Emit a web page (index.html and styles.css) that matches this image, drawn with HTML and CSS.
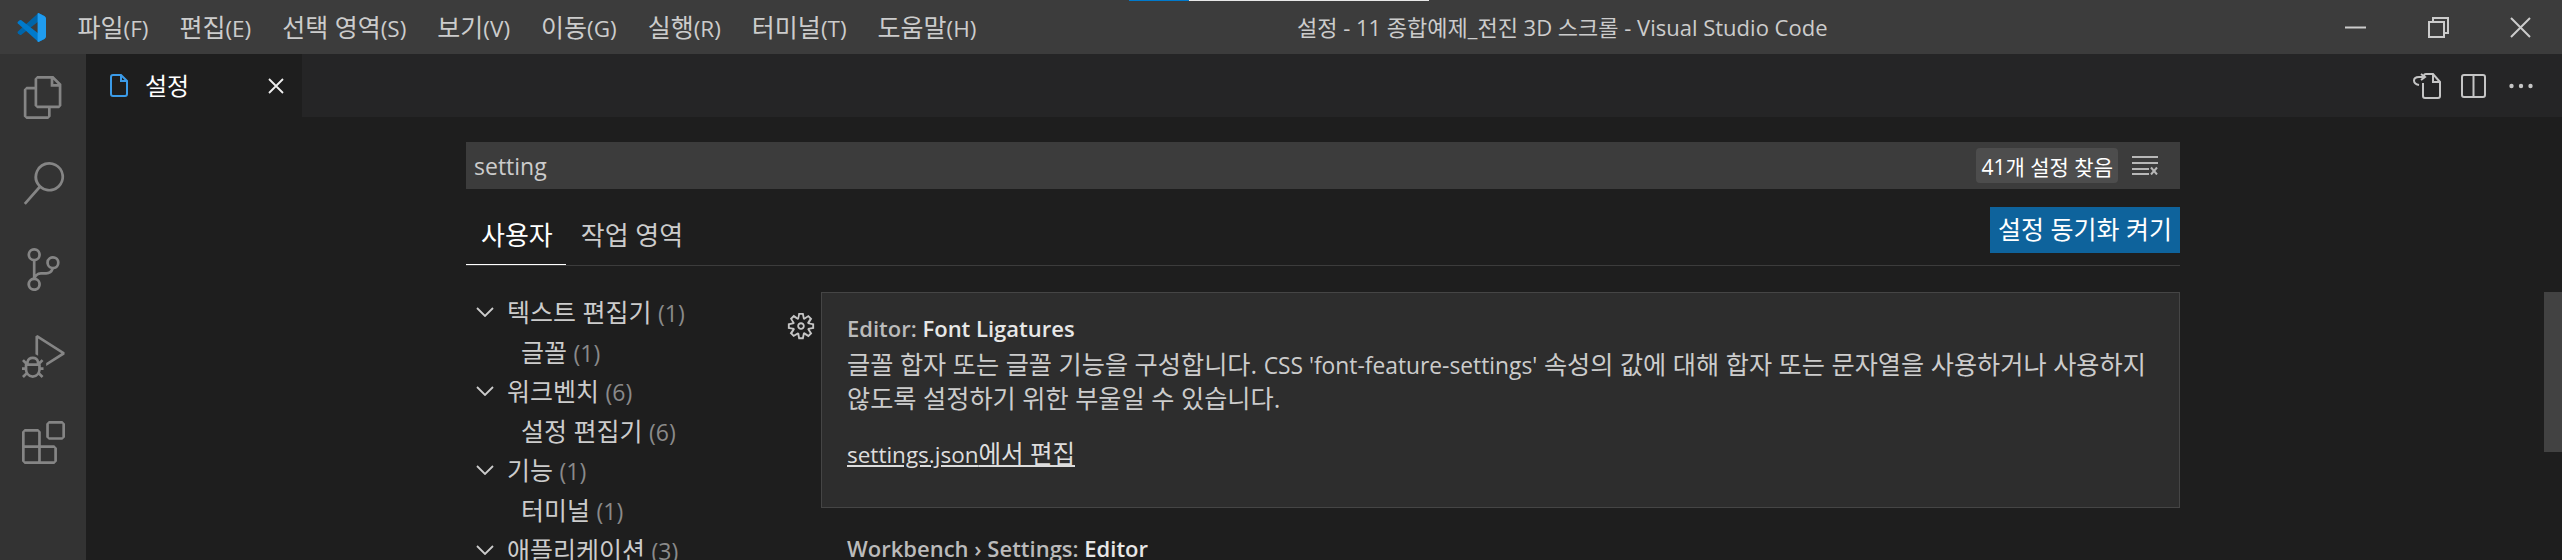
FILE: index.html
```html
<!DOCTYPE html>
<html lang="ko">
<head>
    <meta charset="UTF-8">
    <title>설정 - 11 종합예제_전진 3D 스크롤 - Visual Studio Code</title>
    <link rel="stylesheet" href="styles.css">
</head>
<body>

<svg class="defs" width="0" height="0">
    <symbol id="chevron" viewBox="0 0 18 10"><polyline points="1,1 9,9 17,1" fill="none" stroke="currentColor" stroke-width="1.8"/></symbol>
</svg>

<div class="titlebar">
    <svg class="logo" viewBox="0 0 100 100">
        <path fill="#0065a9" d="M97 11 74 0 3 64q-3 3 0 6l6 5q3 2 6 0z"/>
        <path fill="#007acc" d="M97 89 74 100 3 36q-3-3 0-6l6-5q3-2 6 0z"/>
        <path fill="#1f9cf0" d="M74 100q-2 0-3-2V2q1-2 3-2l20 10q6 3 6 8v64q0 5-6 8z"/>
    </svg>
    <div class="menu">
        <span class="menu-item">파일<span class="latin">(F)</span></span>
        <span class="menu-item">편집<span class="latin">(E)</span></span>
        <span class="menu-item">선택 영역<span class="latin">(S)</span></span>
        <span class="menu-item">보기<span class="latin">(V)</span></span>
        <span class="menu-item">이동<span class="latin">(G)</span></span>
        <span class="menu-item">실행<span class="latin">(R)</span></span>
        <span class="menu-item">터미널<span class="latin">(T)</span></span>
        <span class="menu-item">도움말<span class="latin">(H)</span></span>
    </div>
    <div class="window-title">설정 - 11 종합예제_전진 3D 스크롤 - Visual Studio Code</div>
    <div class="window-controls">
        <div class="window-btn">
            <svg width="21" height="3" viewBox="0 0 21 3"><path d="M0 1.5h21" stroke="#ccc" stroke-width="2"/></svg>
        </div>
        <div class="window-btn">
            <svg width="21" height="21" viewBox="0 0 21 21" fill="none" stroke="#ccc" stroke-width="2"><rect x="1" y="5" width="15" height="15"/><path d="M5 5V1h15v15h-4"/></svg>
        </div>
        <div class="window-btn">
            <svg width="21" height="21" viewBox="0 0 21 21"><path d="M1 1l19 19M20 1 1 20" stroke="#ccc" stroke-width="2"/></svg>
        </div>
    </div>
    <div class="progress-tick"><span></span></div>
</div>

<div class="workbench">
    <div class="activitybar">
        <div class="activity-icon">
            <svg viewBox="0 0 24 24"><path d="M17.5 0h-9L7 1.5V6H2.5L1 7.5v15.07L2.5 24h12.07L16 22.57V18h4.7l1.3-1.43V4.5L17.5 0zm0 2.12l2.38 2.38H17.5V2.12zm-3 20.38h-12v-15H7v9.07L8.5 18h6v4.5zm6-6h-12v-15H16V6h4.5v10.5z"/></svg>
        </div>
        <div class="activity-icon">
            <svg viewBox="0 0 24 24"><path d="M15.25 0a8.25 8.25 0 0 0-6.18 13.72L1 22.88l1.12 1 8.05-9.12A8.251 8.251 0 1 0 15.25.01V0zm0 15a6.75 6.75 0 1 1 0-13.5 6.75 6.75 0 0 1 0 13.5z"/></svg>
        </div>
        <div class="activity-icon">
            <svg viewBox="0 0 24 24"><path d="M21.007 8.222A3.738 3.738 0 0 0 15.045 5.2a3.737 3.737 0 0 0 1.156 6.583 2.988 2.988 0 0 1-2.668 1.67h-2.99a4.456 4.456 0 0 0-2.989 1.165V7.4a3.737 3.737 0 1 0-1.494 0v9.117a3.776 3.776 0 1 0 1.816.099 2.99 2.99 0 0 1 2.668-1.667h2.99a4.484 4.484 0 0 0 4.223-3.039 3.736 3.736 0 0 0 3.25-3.687zM4.565 3.738a2.242 2.242 0 1 1 4.484 0 2.242 2.242 0 0 1-4.484 0zm4.484 16.441a2.242 2.242 0 1 1-4.484 0 2.242 2.242 0 0 1 4.484 0zm8.221-9.715a2.242 2.242 0 1 1 0-4.485 2.242 2.242 0 0 1 0 4.485z"/></svg>
        </div>
        <div class="activity-icon">
            <svg viewBox="0 0 24 24"><path d="M10.94 13.5l-1.32 1.32a3.73 3.73 0 0 0-7.24 0L1.06 13.5 0 14.56l1.72 1.72-.22.22V18H0v1.5h1.5v.08c.077.489.214.966.41 1.42L0 22.94 1.06 24l1.65-1.65A4.308 4.308 0 0 0 6 24a4.31 4.31 0 0 0 3.29-1.65L10.94 24 12 22.94 10.09 21c.198-.464.336-.951.41-1.45v-.05H12V18h-1.5v-1.5l-.22-.22L12 14.56l-1.06-1.06zM6 13.5a2.25 2.25 0 0 1 2.25 2.25h-4.5A2.25 2.25 0 0 1 6 13.5zm3 6a3.33 3.33 0 0 1-3 3 3.33 3.33 0 0 1-3-3v-2.25h6v2.25zm14.76-9.9v1.26L13.5 17.37v-1.77l8.45-5.37L9 2v9.6a5.28 5.28 0 0 0-1.5-.9V.63L8.64 0l15.12 9.6z"/></svg>
        </div>
        <div class="activity-icon">
            <svg viewBox="0 0 24 24"><path d="M13.5 1.5L15 0h7.5L24 1.5V9l-1.5 1.5H15L13.5 9V1.5zm1.5 0V9h7.5V1.5H15zM0 15V6l1.5-1.5H9L10.5 6v7.5H18l1.5 1.5v7.5L18 24H1.5L0 22.5V15zm9-1.5V6H1.5v7.5H9zM9 15H1.5v7.5H9V15zm1.5 7.5H18V15h-7.5v7.5z"/></svg>
        </div>
    </div>

    <div class="editor">
        <div class="tabbar">
            <div class="tab">
                <svg class="tab-icon" viewBox="0 0 18 23" fill="none" stroke="#3b9be8" stroke-width="2"><path d="M1 3q0-2 2-2h8l6 6v13q0 2-2 2H3q-2 0-2-2z"/><path d="M11 1v6h6"/></svg>
                <span class="tab-label">설정</span>
                <svg class="tab-close" viewBox="0 0 16 16"><path d="M1 1l14 14M15 1 1 15" stroke="#eee" stroke-width="1.8"/></svg>
            </div>
            <div class="tab-actions">
                <div class="tab-action">
                    <svg width="28" height="26" viewBox="0 0 28 26" fill="none" stroke="#c5c5c5" stroke-width="2"><path d="M10 10v13q0 2 2 2h13q2 0 2-2V9l-7-8h-7q-2 0-2 2"/><path d="M20 1v8h7"/><path d="M6 12Q1 11 1 7.5T6 4h6"/><path d="M8 1l4 3-4 3"/></svg>
                </div>
                <div class="tab-action">
                    <svg width="25" height="24" viewBox="0 0 25 24" fill="none" stroke="#c5c5c5" stroke-width="2"><rect x="1" y="1" width="23" height="22" rx="2"/><path d="M12.5 1v22"/></svg>
                </div>
                <div class="tab-action">
                    <svg width="24" height="6" viewBox="0 0 24 6" fill="#c5c5c5"><circle cx="2.5" cy="3" r="2.2"/><circle cx="12" cy="3" r="2.2"/><circle cx="21.5" cy="3" r="2.2"/></svg>
                </div>
            </div>
        </div>

        <div class="settings">
            <div class="search">
                <span class="search-value">setting</span>
                <span class="search-count">41개 설정 찾음</span>
                <svg class="search-clear" viewBox="0 0 26 19" fill="none" stroke="#b8b8b8" stroke-width="2"><path d="M0 1h26M0 7h26M0 13h17M0 18h17"/><path d="M19 11.5l6 7M25 11.5l-6 7"/></svg>
            </div>

            <div class="settings-header">
                <div class="scope-tab active">사용자</div>
                <div class="scope-tab">작업 영역</div>
                <div class="sync-btn">설정 동기화 켜기</div>
            </div>

            <div class="settings-body">
                <div class="toc">
                    <div class="toc-row"><svg class="chevron"><use href="#chevron"/></svg>텍스트 편집기 <span class="count">(1)</span></div>
                    <div class="toc-row child">글꼴 <span class="count">(1)</span></div>
                    <div class="toc-row"><svg class="chevron"><use href="#chevron"/></svg>워크벤치 <span class="count">(6)</span></div>
                    <div class="toc-row child">설정 편집기 <span class="count">(6)</span></div>
                    <div class="toc-row"><svg class="chevron"><use href="#chevron"/></svg>기능 <span class="count">(1)</span></div>
                    <div class="toc-row child">터미널 <span class="count">(1)</span></div>
                    <div class="toc-row"><svg class="chevron"><use href="#chevron"/></svg>애플리케이션 <span class="count">(3)</span></div>
                </div>

                <div class="setting-list">
                    <div class="setting-row">
                        <svg class="gear" viewBox="0 0 16 16"><path fill="#c5c5c5" d="M9.1 4.4L8.6 2H7.4l-.5 2.4-.7.3-2-1.3-.9.8 1.3 2-.2.7-2.4.5v1.2l2.4.5.3.8-1.3 2 .8.8 2-1.3.8.3.4 2.3h1.2l.5-2.4.8-.3 2 1.3.8-.8-1.3-2 .3-.8 2.3-.4V7.4l-2.4-.5-.3-.8 1.3-2-.8-.8-2 1.3-.7-.2zM9.4 1l.5 2.4L12 2.1l2 2-1.4 2.1 2.4.4v2.8l-2.4.5L14 12l-2 2-2.1-1.4-.5 2.4H6.6l-.5-2.4L4 13.9l-2-2 1.4-2.1L1 9.4V6.6l2.4-.5L2.1 4l2-2 2.1 1.4.4-2.4h2.8zm.6 7c0 1.1-.9 2-2 2s-2-.9-2-2 .9-2 2-2 2 .9 2 2zM8 9c.6 0 1-.4 1-1s-.4-1-1-1-1 .4-1 1 .4 1 1 1z"/></svg>
                        <div class="setting-box">
                            <div class="setting-title">Editor: <b>Font Ligatures</b></div>
                            <div class="setting-desc">글꼴 합자 또는 글꼴 기능을 구성합니다. <span class="latin">CSS 'font-feature-settings'</span> 속성의 값에 대해 합자 또는 문자열을 사용하거나 사용하지<br>않도록 설정하기 위한 부울일 수 있습니다.</div>
                            <div class="setting-link"><span class="latin">settings.json</span>에서 편집</div>
                        </div>
                    </div>
                    <div class="setting-next">
                        <div class="setting-title">Workbench › Settings: <b>Editor</b></div>
                    </div>
                </div>
            </div>
        </div>
        <div class="scrollbar"></div>
    </div>
</div>

</body>
</html>
```

FILE: styles.css
```css
html, body {
    margin: 0;
    height: 560px;
    overflow: hidden;
    background: #1e1e1e;
}
body {
    font-family: "Open Sans", "Noto Sans CJK KR", sans-serif;
    font-size: 25px;
    color: #ccc;
}
.latin {
    font-size: 22.5px;
}
.defs {
    display: block;
    height: 0;
}
.titlebar {
    display: flex;
    align-items: center;
    height: 54px;
    background: #3c3c3c;
    position: relative;
}
.logo {
    width: 29px;
    height: 29px;
    margin-left: 17px;
}
.menu {
    display: flex;
    margin: 0 0 2px 16px;
}
.menu-item {
    padding: 0 15.5px;
    font-size: 25px;
    white-space: nowrap;
}
.window-title {
    margin: 0 0 2px 305px;
    flex: 1;
    font-size: 22px;
    white-space: nowrap;
}
.window-controls {
    display: flex;
}
.window-btn {
    width: 82.67px;
    height: 54px;
    display: flex;
    align-items: center;
    justify-content: center;
}
.progress-tick {
    position: absolute;
    left: 1129px;
    top: 0;
    width: 300px;
    height: 1px;
    background: #e8e8e8;
}
.progress-tick span {
    display: block;
    width: 60px;
    height: 1px;
    background: #007acc;
}
.workbench {
    display: flex;
    height: 506px;
}
.activitybar {
    width: 86px;
    flex-shrink: 0;
    background: #333;
}
.activity-icon {
    height: 86.4px;
    display: flex;
    align-items: center;
    justify-content: center;
}
.activity-icon svg {
    width: 43px;
    height: 43px;
    fill: #858585;
}
.editor {
    flex: 1;
    position: relative;
    overflow: hidden;
}
.tabbar {
    display: flex;
    justify-content: space-between;
    height: 63px;
    background: #252526;
}
.tab {
    width: 216px;
    box-sizing: border-box;
    display: flex;
    align-items: center;
    padding-left: 24px;
    background: #1e1e1e;
    color: #fff;
}
.tab-icon {
    width: 18px;
    height: 23px;
}
.tab-label {
    margin-left: 17px;
    flex: 1;
    font-size: 24px;
    line-height: 56px;
}
.tab-close {
    width: 16px;
    height: 16px;
    margin-right: 18px;
}
.tab-actions {
    display: flex;
    align-items: center;
    padding-right: 18px;
}
.tab-action {
    width: 47px;
    display: flex;
    justify-content: center;
}
.settings {
    padding: 25px 0 0 380px;
    width: 1714px;
}
.search {
    display: flex;
    align-items: center;
    height: 47px;
    background: #3c3c3c;
}
.search-value {
    flex: 1;
    padding-left: 8px;
    font-size: 23px;
}
.search-count {
    display: flex;
    align-items: center;
    height: 35px;
    padding: 0 5px;
    border-radius: 4px;
    background: #4d4d4d;
    color: #fff;
    font-size: 21px;
}
.search-clear {
    width: 26px;
    height: 19px;
    margin: 0 22px 0 14px;
}
.settings-header {
    display: flex;
    height: 77px;
    border-bottom: 1px solid #3c3c3c;
    box-sizing: border-box;
}
.scope-tab {
    padding: 0 13px 0 15px;
    font-size: 26px;
    line-height: 92px;
    height: 76px;
    box-sizing: border-box;
    white-space: nowrap;
}
.scope-tab.active {
    color: #fff;
    border-bottom: 1px solid #fff;
}
.sync-btn {
    margin: 18px 0 0 auto;
    height: 46px;
    line-height: 44px;
    padding: 0 8px;
    background: #0e639c;
    color: #fff;
}
.settings-body {
    display: flex;
    padding-top: 26px;
}
.toc {
    width: 322px;
    flex-shrink: 0;
    white-space: nowrap;
}
.toc-row {
    height: 39.6px;
    line-height: 40px;
    padding-left: 41px;
    position: relative;
}
.toc-row.child {
    padding-left: 55px;
}
.count {
    color: #8a8a8a;
    font-size: 23px;
}
.chevron {
    position: absolute;
    left: 10px;
    top: 15px;
    width: 18px;
    height: 10px;
    color: #ccc;
}
.setting-list {
    flex: 1;
}
.setting-row {
    display: flex;
    align-items: flex-start;
}
.gear {
    width: 30px;
    height: 30px;
    margin: 19px 5px 0 -2px;
    flex-shrink: 0;
}
.setting-box {
    flex: 1;
    box-sizing: border-box;
    height: 216px;
    padding: 19px 25px 0;
    background: #2d2d2d;
    border: 1px solid #454545;
}
.setting-title {
    font-size: 22px;
    line-height: 32px;
    font-weight: 600;
    color: #bbb;
}
.setting-title b {
    font-weight: 600;
    color: #e7e7e7;
}
.setting-desc {
    margin-top: 4px;
    font-size: 25.2px;
    line-height: 32px;
    white-space: nowrap;
}
.setting-desc .latin {
    font-size: 22.8px;
}
.setting-link {
    margin-top: 24px;
    font-size: 24.5px;
    line-height: 32px;
    text-decoration: underline;
    color: #ddd;
}
.setting-next {
    margin: 24px 0 0 59px;
}
.scrollbar {
    position: absolute;
    right: 0;
    top: 238px;
    width: 18px;
    height: 160px;
    background: #424242;
}
```
